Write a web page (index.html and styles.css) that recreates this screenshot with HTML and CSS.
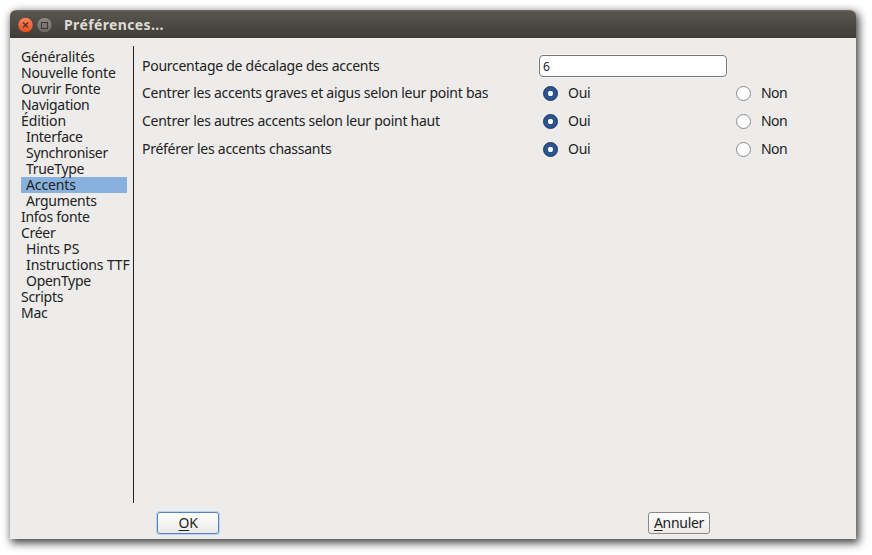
FILE: index.html
```html
<!DOCTYPE html>
<html lang="fr">
<head>
<meta charset="utf-8">
<title>Préférences...</title>
<link rel="stylesheet" href="styles.css">
</head>
<body>
<main class="window">
  <header class="titlebar">
    <svg class="controls" width="38" height="18" viewBox="0 0 38 18">
      <defs>
        <linearGradient id="red" x2="0" y2="1"><stop stop-color="#f88560"/><stop offset="1" stop-color="#e34f1e"/></linearGradient>
        <linearGradient id="gray" x2="0" y2="1"><stop stop-color="#8d8b84"/><stop offset="1" stop-color="#6b6962"/></linearGradient>
      </defs>
      <circle cx="9.5" cy="9" r="7.7" fill="url(#red)" stroke="#3b3a34" stroke-width=".7"/>
      <path d="M7 6.5l5 5M12 6.5l-5 5" stroke="#5c2c1c" stroke-width="1.2"/>
      <circle cx="28.5" cy="9" r="7.7" fill="url(#gray)" stroke="#3b3a34" stroke-width=".7"/>
      <rect x="25.5" y="6.5" width="6" height="6" fill="none" stroke="#3a3934"/>
    </svg>
    <h1>Préférences...</h1>
  </header>
  <div class="content">
    <nav class="sections">
      <div class="wide">Généralités</div>
      <div class="wide">Nouvelle fonte</div>
      <div>Ouvrir Fonte</div>
      <div>Navigation</div>
      <div class="wide">Édition</div>
      <div class="sub">Interface</div>
      <div class="sub">Synchroniser</div>
      <div class="sub">TrueType</div>
      <div class="sub wide selected">Accents</div>
      <div class="sub">Arguments</div>
      <div>Infos fonte</div>
      <div>Créer</div>
      <div class="sub wide">Hints PS</div>
      <div class="sub wide">Instructions TTF</div>
      <div class="sub">OpenType</div>
      <div>Scripts</div>
      <div>Mac</div>
    </nav>
    <section class="settings">
      <div class="row"><span>Pourcentage de décalage des accents</span><div class="field">6</div></div>
      <div class="row"><span>Centrer les accents graves et aigus selon leur point bas</span><div class="choice"><i class="radio on"></i>Oui</div><div class="choice"><i class="radio"></i>Non</div></div>
      <div class="row"><span>Centrer les autres accents selon leur point haut</span><div class="choice"><i class="radio on"></i>Oui</div><div class="choice"><i class="radio"></i>Non</div></div>
      <div class="row"><span>Préférer les accents chassants</span><div class="choice"><i class="radio on"></i>Oui</div><div class="choice"><i class="radio"></i>Non</div></div>
    </section>
  </div>
  <footer class="actions">
    <div class="button default"><span><u>O</u>K</span></div>
    <div class="button"><span><u>A</u>nnuler</span></div>
  </footer>
</main>
</body>
</html>
```
FILE: styles.css
```css
* { box-sizing: border-box; }
body {
  margin: 0;
  padding: 10px;
  height: 555px;
  overflow: hidden;
  background: #fff;
  color: #222;
  font: 14px/16px "Noto Sans", "Open Sans", sans-serif;
  letter-spacing: -0.3px;
}
.window {
  width: 846px;
  height: 529px;
  display: flex;
  flex-direction: column;
  background: #edecea;
  border-radius: 6px 6px 0 0;
  box-shadow: 2px 3px 9px 1px rgba(0, 0, 0, .75);
}
.titlebar {
  height: 28px;
  flex: none;
  display: flex;
  align-items: center;
  padding-left: 6px;
  background: linear-gradient(#5a574f, #3d3c37);
  border-top: 1px solid #6c6a62;
  border-radius: 6px 6px 0 0;
}
.controls { display: block; }
h1 {
  margin: 0 0 0 10px;
  font-size: 14px;
  line-height: 18px;
  font-weight: 700;
  letter-spacing: 0.37px;
  color: #dfdbd2;
}
.content {
  display: flex;
  height: 465px;
  padding-top: 8px;
}
.sections {
  width: 124px;
  padding: 3px 0 0 11px;
  border-right: 1px solid #222;
  white-space: nowrap;
}
.sections div { width: 106px; height: 16px; }
.sections .sub { padding-left: 5px; }
.sections .wide { letter-spacing: -0.12px; }
.sections .selected { background: #88b1dd; }
.settings { padding: 6px 0 0 8px; }
.row {
  display: grid;
  grid-template-columns: 397px 193px 100px;
  align-items: center;
  height: 28px;
}
.row:first-child { height: 27px; }
.row > span { letter-spacing: -0.265px; }
.field {
  width: 188px;
  height: 22px;
  padding: 3px;
  font-size: 12px;
  color: #223;
  background: #fff;
  border: 1px solid #777;
  border-radius: 4px;
  box-shadow: 0 0 0 1px #f6f5f3;
}
.choice { display: flex; align-items: center; gap: 10px; padding-left: 4px; }
.choice:last-child { letter-spacing: -0.6px; }
.radio {
  width: 15px;
  height: 15px;
  background: #fff;
  border: 1px solid #8b8b8b;
  border-radius: 50%;
}
.radio.on {
  background: radial-gradient(circle, #fff 0 2.3px, #2a5594 3px);
  border-color: #172f55;
}
.actions {
  display: flex;
  justify-content: space-between;
  padding: 9px 146px 0 147px;
}
.button {
  width: 62px;
  height: 22px;
  display: flex;
  align-items: center;
  justify-content: center;
  background: linear-gradient(#fff, #ebeae8);
  border: 1px solid #8b8986;
  border-radius: 3px;
}
.button.default { border-color: #5085c4; box-shadow: 0 0 0 1px #bcd3ec; }
.button u { text-underline-offset: 2px; }
```
